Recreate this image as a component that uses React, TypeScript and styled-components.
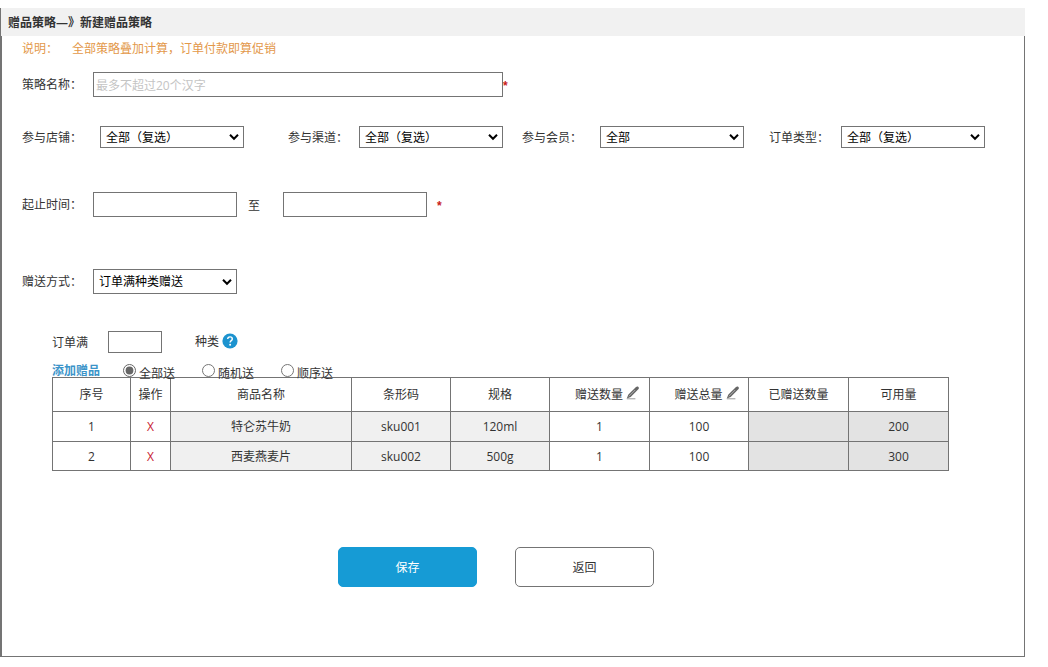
import React from "react";
import styled, { createGlobalStyle } from "styled-components";

const LINE = "#747474";

const GlobalStyle = createGlobalStyle`
  *, *::before, *::after { box-sizing: border-box; }
  body {
    margin: 0;
    background: #fff;
    color: #333;
    font: 12px/18px "Open Sans", "Noto Sans CJK SC", sans-serif;
  }
  input, select, button { font: inherit; margin: 0; }
`;

const Page = styled.div`
  padding: 8px 23px 10px 0;
`;

const Frame = styled.main`
  border-left: 1px solid ${LINE};
`;

const TitleBar = styled.h1`
  margin: 0;
  padding: 2px 7px 0;
  background: #f1f1f1;
  font-size: 12px;
  font-weight: 700;
  line-height: 26px;
`;

const Panel = styled.form`
  padding: 0 20px 69px;
  border: 1px solid ${LINE};
  border-top: 0;
`;

const Notice = styled.p`
  display: flex;
  gap: 2px;
  margin: 0 0 12px;
  padding-top: 2px;
  color: #e3984a;
  line-height: 22px;
`;

const NoticeLabel = styled.span`
  width: 48px;
`;

const Row = styled.div<{ $space: number }>`
  display: flex;
  align-items: center;
  margin-bottom: ${(p) => p.$space}px;
`;

const Filters = styled.div`
  display: grid;
  grid-template-columns: 266fr 234fr 247fr 216fr;
  margin: 0 19px 44px 0;
`;

const Field = styled.div`
  display: flex;
  align-items: center;
`;

const Label = styled.label<{ $width?: number }>`
  flex: none;
  width: ${(p) => p.$width ?? 71}px;
  padding-top: 1px;
`;

const TextBox = styled.input<{ $width: number; $height?: number }>`
  flex: 0 1 ${(p) => p.$width}px;
  min-width: 0;
  width: ${(p) => p.$width}px;
  height: ${(p) => p.$height ?? 25}px;
  padding: 2px 2px 0;
  border: 1px solid ${LINE};
  border-radius: 0;
  background: #fff;
  &::placeholder { color: #c4c4c4; }
`;

const SelectBox = styled.span<{ $height: number }>`
  display: grid;
  flex: 0 1 144px;
  min-width: 0;
  height: ${(p) => p.$height}px;

  > * { grid-area: 1 / 1; }
  > svg {
    align-self: center;
    justify-self: end;
    margin-right: 5px;
    pointer-events: none;
  }
`;

const NativeSelect = styled.select`
  appearance: none;
  width: 100%;
  min-width: 0;
  height: 100%;
  padding: 1px 20px 0 5px;
  border: 1px solid ${LINE};
  border-radius: 0;
  background-color: #fff;
  color: #000;
`;

const Required = styled.span<{ $gap?: number }>`
  margin-left: ${(p) => p.$gap ?? 0}px;
  padding-top: 2px;
  color: #c8201c;
  font-family: "Liberation Sans", sans-serif;
  font-weight: 700;
`;

const Until = styled.label`
  width: 46px;
  padding: 2px 0 0 11px;
`;

const GiftSection = styled.section`
  margin: 0 55px 76px 30px;
`;

const Threshold = styled.div`
  display: flex;
  align-items: center;
`;

const Unit = styled.span`
  display: flex;
  align-items: flex-start;
  gap: 3px;
  margin-left: 33px;
  line-height: 22px;
`;

const IconButton = styled.button`
  display: inline-flex;
  padding: 0;
  border: 0;
  background: none;
  cursor: pointer;
`;

const HelpButton = styled(IconButton)`
  padding-top: 2px;
`;

const GiftOptions = styled.div`
  display: flex;
  align-items: flex-start;
  height: 24px;
  padding-top: 9px;
`;

const AddLink = styled.a`
  width: 71px;
  color: #3b94c9;
  font-weight: 700;
  text-decoration: none;
`;

const Choice = styled.label`
  display: flex;
  align-items: flex-start;
  gap: 3px;
  width: 79px;
  line-height: 24px;
`;

const Radio = styled.input`
  && { margin-top: 2px; }
  width: 13px;
  height: 13px;
  accent-color: #666;
`;

const GiftTable = styled.table`
  width: 100%;
  table-layout: fixed;
  border-collapse: collapse;
  text-align: center;
`;

const Head = styled.th`
  height: 34px;
  padding: 0;
  border: 1px solid ${LINE};
  font-weight: 400;
`;

const EditableTitle = styled.span`
  display: flex;
  align-items: flex-start;
  justify-content: center;
  gap: 3px;
  padding-left: 16px;
`;

const Cell = styled.td<{ $tone?: string }>`
  height: 30px;
  padding: 0;
  border: 1px solid ${LINE};
  background: ${(p) => p.$tone ?? "#fff"};
  tr:last-child > & {
    height: 29px;
    padding-top: 1px;
  }
`;

const RemoveButton = styled.button`
  padding: 0;
  border: 0;
  background: none;
  color: #c8202f;
  cursor: pointer;
`;

const Actions = styled.div`
  display: flex;
  justify-content: center;
  gap: 38px;
  padding-right: 34px;
`;

const ActionButton = styled.button<{ $primary?: boolean }>`
  width: 139px;
  height: 40px;
  padding: 2px 0 0;
  border: 1px solid ${(p) => (p.$primary ? "#169bd5" : LINE)};
  border-radius: 5px;
  background: ${(p) => (p.$primary ? "#169bd5" : "#fff")};
  color: ${(p) => (p.$primary ? "#fff" : "#333")};
  cursor: pointer;
`;

const HelpIcon = () => (
  <svg width="16" height="16" viewBox="0 0 16 16" aria-hidden="true">
    <circle cx="8" cy="8" r="7.6" fill="#1c93cf" />
    <path d="M5.7 6.1C5.7 4.6 6.7 3.9 8 3.9s2.3.8 2.3 2c0 1.7-2.2 1.7-2.2 3.5" fill="none" stroke="#fff" strokeWidth="1.4" />
    <circle cx="8.1" cy="11.8" r="1" fill="#fff" />
  </svg>
);

const PencilIcon = () => (
  <svg width="14" height="14" viewBox="0 0 14 14" aria-hidden="true">
    <path d="M.8 12.6 2.2 8.8 10 1.1c.7-.7 1.7-.8 2.4-.2.7.7.6 1.7-.1 2.4L4.7 11Z" fill="#666" />
    <path d="M2.9 10.3 9.2 4" stroke="#ccc" strokeWidth=".7" />
    <path d="M.8 12.8h8.6" stroke="#999" strokeWidth="1" />
  </svg>
);

const ChevronIcon = () => (
  <svg width="10" height="8" viewBox="0 0 10 8" aria-hidden="true">
    <path d="M1 1.8 5 5.8 9 1.8" fill="none" stroke="#000" strokeWidth="2" />
  </svg>
);

function Select({ id, value, height = 22 }: { id: string; value: string; height?: number }) {
  return (
    <SelectBox $height={height}>
      <NativeSelect id={id}>
        <option>{value}</option>
      </NativeSelect>
      <ChevronIcon />
    </SelectBox>
  );
}

const filters = [
  { id: "shop", label: "参与店铺：", value: "全部（复选）", width: 78 },
  { id: "channel", label: "参与渠道：", value: "全部（复选）", width: 71 },
  { id: "member", label: "参与会员：", value: "全部", width: 78 },
  { id: "order-type", label: "订单类型：", value: "全部（复选）", width: 72 },
];

const columns = [
  { title: "序号", width: 78 },
  { title: "操作", width: 40 },
  { title: "商品名称", width: 181 },
  { title: "条形码", width: 99 },
  { title: "规格", width: 99 },
  { title: "赠送数量", width: 100, editable: true },
  { title: "赠送总量", width: 99, editable: true },
  { title: "已赠送数量", width: 100 },
  { title: "可用量", width: 100 },
];

const gifts = [
  { name: "特仑苏牛奶", code: "sku001", spec: "120ml", count: 1, total: 100, sent: "", stock: 200 },
  { name: "西麦燕麦片", code: "sku002", spec: "500g", count: 1, total: 100, sent: "", stock: 300 },
];

const LIGHT = "#f0f0f0";
const DARK = "#e3e3e3";

export default function App() {
  return (
    <Page>
      <GlobalStyle />
      <Frame>
        <TitleBar>赠品策略—》新建赠品策略</TitleBar>
        <Panel onSubmit={(e) => e.preventDefault()}>
          <Notice>
            <NoticeLabel>说明：</NoticeLabel>
            <span>全部策略叠加计算，订单付款即算促销</span>
          </Notice>

          <Row $space={29}>
            <Label htmlFor="name">策略名称：</Label>
            <TextBox id="name" $width={410} placeholder="最多不超过20个汉字" />
            <Required>*</Required>
          </Row>

          <Filters>
            {filters.map((f) => (
              <Field key={f.id}>
                <Label htmlFor={f.id} $width={f.width}>{f.label}</Label>
                <Select id={f.id} value={f.value} />
              </Field>
            ))}
          </Filters>

          <Row $space={52}>
            <Label htmlFor="start">起止时间：</Label>
            <TextBox id="start" $width={144} />
            <Until htmlFor="end">至</Until>
            <TextBox id="end" $width={144} />
            <Required $gap={10}>*</Required>
          </Row>

          <Row $space={37}>
            <Label htmlFor="mode">赠送方式：</Label>
            <Select id="mode" value="订单满种类赠送" height={25} />
          </Row>

          <GiftSection>
            <Threshold>
              <Label htmlFor="kinds" $width={56}>订单满</Label>
              <TextBox id="kinds" $width={54} $height={22} />
              <Unit>
                种类
                <HelpButton type="button" aria-label="帮助">
                  <HelpIcon />
                </HelpButton>
              </Unit>
            </Threshold>

            <GiftOptions>
              <AddLink href="#add">添加赠品</AddLink>
              {["全部送", "随机送", "顺序送"].map((text, i) => (
                <Choice key={text}>
                  <Radio type="radio" name="rule" defaultChecked={i === 0} />
                  {text}
                </Choice>
              ))}
            </GiftOptions>

            <GiftTable>
              <colgroup>
                {columns.map((c) => (
                  <col key={c.title} width={c.width} />
                ))}
              </colgroup>
              <thead>
                <tr>
                  {columns.map((c) => (
                    <Head key={c.title} scope="col">
                      {c.editable ? (
                        <EditableTitle>
                          {c.title}
                          <IconButton type="button" aria-label={"编辑" + c.title}>
                            <PencilIcon />
                          </IconButton>
                        </EditableTitle>
                      ) : (
                        c.title
                      )}
                    </Head>
                  ))}
                </tr>
              </thead>
              <tbody>
                {gifts.map((g, i) => (
                  <tr key={g.code}>
                    <Cell>{i + 1}</Cell>
                    <Cell>
                      <RemoveButton type="button">X</RemoveButton>
                    </Cell>
                    <Cell $tone={LIGHT}>{g.name}</Cell>
                    <Cell $tone={LIGHT}>{g.code}</Cell>
                    <Cell $tone={LIGHT}>{g.spec}</Cell>
                    <Cell>{g.count}</Cell>
                    <Cell>{g.total}</Cell>
                    <Cell $tone={DARK}>{g.sent}</Cell>
                    <Cell $tone={DARK}>{g.stock}</Cell>
                  </tr>
                ))}
              </tbody>
            </GiftTable>
          </GiftSection>

          <Actions>
            <ActionButton type="submit" $primary>保存</ActionButton>
            <ActionButton type="button">返回</ActionButton>
          </Actions>
        </Panel>
      </Frame>
    </Page>
  );
}
